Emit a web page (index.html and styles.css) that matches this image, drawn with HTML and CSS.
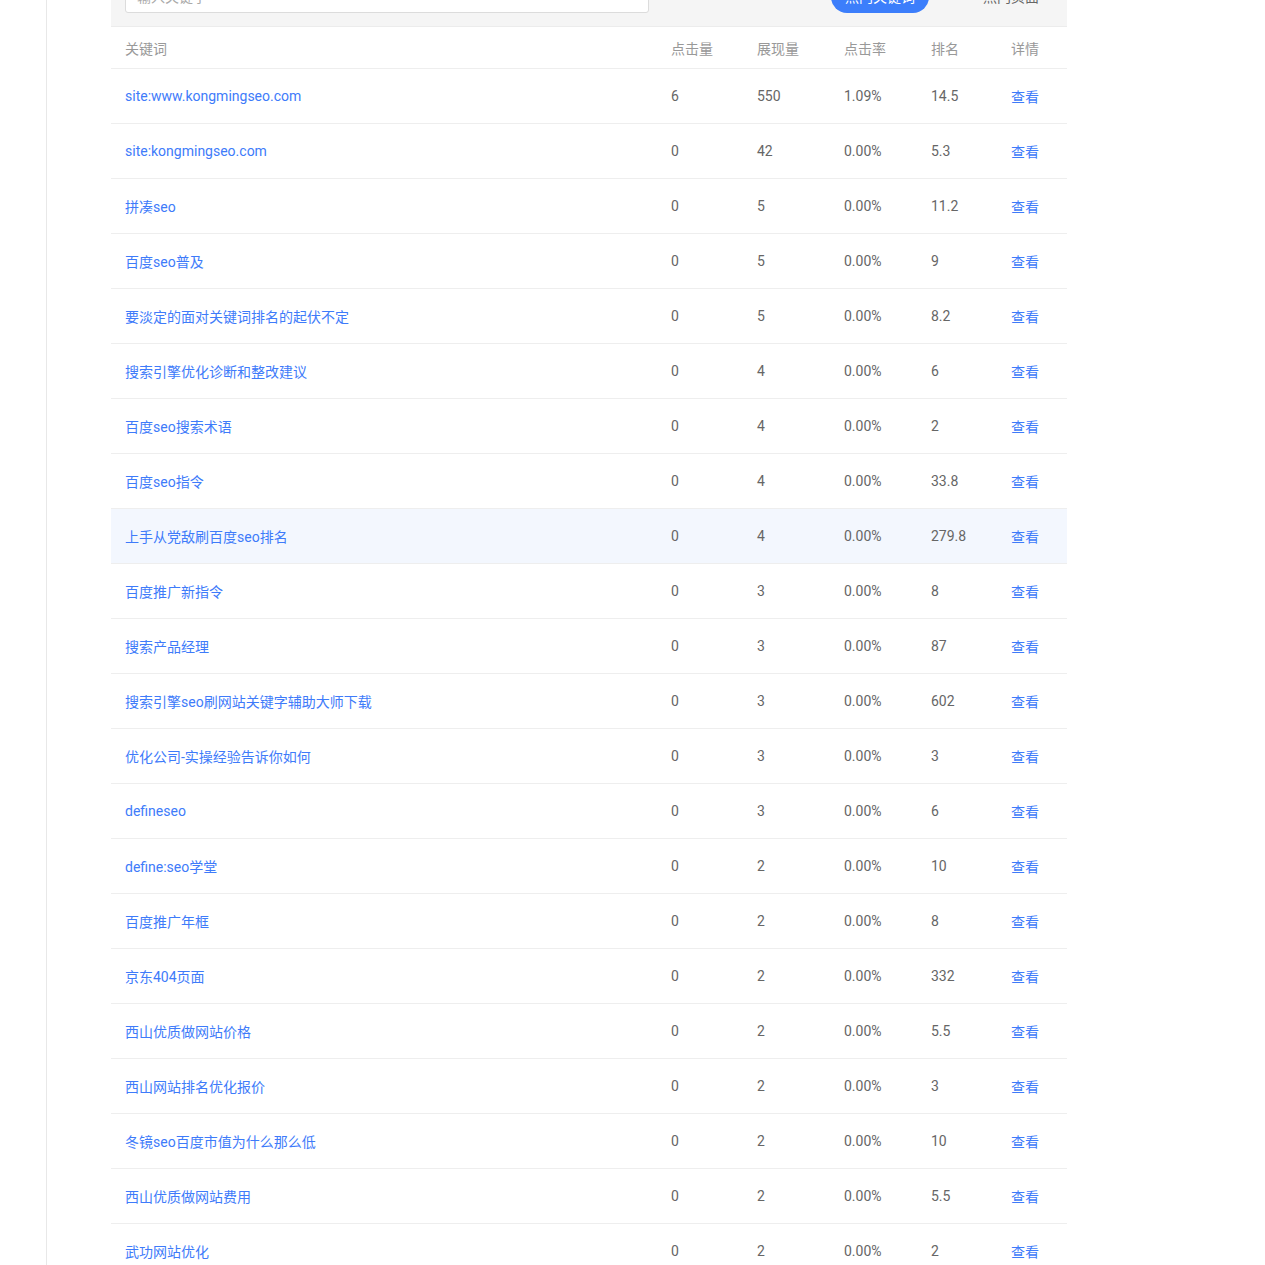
FILE: index.html
```html
<!DOCTYPE html>
<html lang="zh-CN">
<head>
<meta charset="utf-8">
<title>关键词</title>
<link rel="stylesheet" href="styles.css">
</head>
<body>
<div class="layout">
  <aside class="side"></aside>
  <main class="main">
    <div class="toolbar">
      <div class="search">输入关键字</div>
      <div class="tabs">
        <span class="tab active">热门关键词</span>
        <span class="tab">热门页面</span>
      </div>
    </div>
    <div class="table">
      <div class="row head">
        <div class="c kw">关键词</div><div class="c">点击量</div><div class="c">展现量</div><div class="c">点击率</div><div class="c">排名</div><div class="c">详情</div>
      </div>
      <div class="row"><div class="c kw link">site:www.kongmingseo.com</div><div class="c">6</div><div class="c">550</div><div class="c">1.09%</div><div class="c">14.5</div><div class="c link">查看</div></div>
      <div class="row"><div class="c kw link">site:kongmingseo.com</div><div class="c">0</div><div class="c">42</div><div class="c">0.00%</div><div class="c">5.3</div><div class="c link">查看</div></div>
      <div class="row"><div class="c kw link">拼凑seo</div><div class="c">0</div><div class="c">5</div><div class="c">0.00%</div><div class="c">11.2</div><div class="c link">查看</div></div>
      <div class="row"><div class="c kw link">百度seo普及</div><div class="c">0</div><div class="c">5</div><div class="c">0.00%</div><div class="c">9</div><div class="c link">查看</div></div>
      <div class="row"><div class="c kw link">要淡定的面对关键词排名的起伏不定</div><div class="c">0</div><div class="c">5</div><div class="c">0.00%</div><div class="c">8.2</div><div class="c link">查看</div></div>
      <div class="row"><div class="c kw link">搜索引擎优化诊断和整改建议</div><div class="c">0</div><div class="c">4</div><div class="c">0.00%</div><div class="c">6</div><div class="c link">查看</div></div>
      <div class="row"><div class="c kw link">百度seo搜索术语</div><div class="c">0</div><div class="c">4</div><div class="c">0.00%</div><div class="c">2</div><div class="c link">查看</div></div>
      <div class="row"><div class="c kw link">百度seo指令</div><div class="c">0</div><div class="c">4</div><div class="c">0.00%</div><div class="c">33.8</div><div class="c link">查看</div></div>
      <div class="row hover"><div class="c kw link">上手从党敌刷百度seo排名</div><div class="c">0</div><div class="c">4</div><div class="c">0.00%</div><div class="c">279.8</div><div class="c link">查看</div></div>
      <div class="row"><div class="c kw link">百度推广新指令</div><div class="c">0</div><div class="c">3</div><div class="c">0.00%</div><div class="c">8</div><div class="c link">查看</div></div>
      <div class="row"><div class="c kw link">搜索产品经理</div><div class="c">0</div><div class="c">3</div><div class="c">0.00%</div><div class="c">87</div><div class="c link">查看</div></div>
      <div class="row"><div class="c kw link">搜索引擎seo刷网站关键字辅助大师下载</div><div class="c">0</div><div class="c">3</div><div class="c">0.00%</div><div class="c">602</div><div class="c link">查看</div></div>
      <div class="row"><div class="c kw link">优化公司-实操经验告诉你如何</div><div class="c">0</div><div class="c">3</div><div class="c">0.00%</div><div class="c">3</div><div class="c link">查看</div></div>
      <div class="row"><div class="c kw link">defineseo</div><div class="c">0</div><div class="c">3</div><div class="c">0.00%</div><div class="c">6</div><div class="c link">查看</div></div>
      <div class="row"><div class="c kw link">define:seo学堂</div><div class="c">0</div><div class="c">2</div><div class="c">0.00%</div><div class="c">10</div><div class="c link">查看</div></div>
      <div class="row"><div class="c kw link">百度推广年框</div><div class="c">0</div><div class="c">2</div><div class="c">0.00%</div><div class="c">8</div><div class="c link">查看</div></div>
      <div class="row"><div class="c kw link">京东404页面</div><div class="c">0</div><div class="c">2</div><div class="c">0.00%</div><div class="c">332</div><div class="c link">查看</div></div>
      <div class="row"><div class="c kw link">西山优质做网站价格</div><div class="c">0</div><div class="c">2</div><div class="c">0.00%</div><div class="c">5.5</div><div class="c link">查看</div></div>
      <div class="row"><div class="c kw link">西山网站排名优化报价</div><div class="c">0</div><div class="c">2</div><div class="c">0.00%</div><div class="c">3</div><div class="c link">查看</div></div>
      <div class="row"><div class="c kw link">冬镜seo百度市值为什么那么低</div><div class="c">0</div><div class="c">2</div><div class="c">0.00%</div><div class="c">10</div><div class="c link">查看</div></div>
      <div class="row"><div class="c kw link">西山优质做网站费用</div><div class="c">0</div><div class="c">2</div><div class="c">0.00%</div><div class="c">5.5</div><div class="c link">查看</div></div>
      <div class="row"><div class="c kw link">武功网站优化</div><div class="c">0</div><div class="c">2</div><div class="c">0.00%</div><div class="c">2</div><div class="c link">查看</div></div>
    </div>
  </main>
</div>
</body>
</html>
```

FILE: styles.css
```css
html, body {
  margin: 0;
  padding: 0;
  background: #fff;
  overflow: hidden;
}
body {
  font-family: Roboto, "Noto Sans CJK SC", "Noto Sans", sans-serif;
  font-size: 14px;
  color: #666;
}
.layout {
  display: flex;
  margin-top: -33px;
  min-height: 1400px;
}
.side {
  width: 46px;
  border-right: 1px solid #e8e8e8;
  flex: none;
}
.main {
  margin-left: 64px;
  width: 956px;
}
.toolbar {
  height: 60px;
  background: #f5f5f5;
  border-bottom: 1px solid #ececec;
  display: flex;
  align-items: center;
  padding: 0 14px;
  box-sizing: border-box;
}
.search {
  width: 524px;
  height: 32px;
  box-sizing: border-box;
  background: #fff;
  border: 1px solid #dcdcdc;
  border-radius: 3px;
  padding: 0 11px;
  line-height: 30px;
  color: #aaa;
}
.tabs {
  margin-left: auto;
  display: flex;
  align-items: center;
  gap: 54px;
  margin-right: 14px;
}
.tab {
  color: #666;
  line-height: 32px;
}
.tab.active {
  background: #3c7efb;
  color: #fff;
  border-radius: 16px;
  padding: 0 14px;
  height: 32px;
}
.row {
  display: grid;
  grid-template-columns: 546px 86px 87px 87px 80px 70px;
  height: 54px;
  align-items: center;
  border-bottom: 1px solid #eeeeee;
}
.row.head {
  height: 41px;
  color: #999;
}
.row.hover {
  background: #f3f7fe;
}
.c {
  padding-left: 14px;
  white-space: nowrap;
}
.link {
  color: #3e7bfa;
}
```
